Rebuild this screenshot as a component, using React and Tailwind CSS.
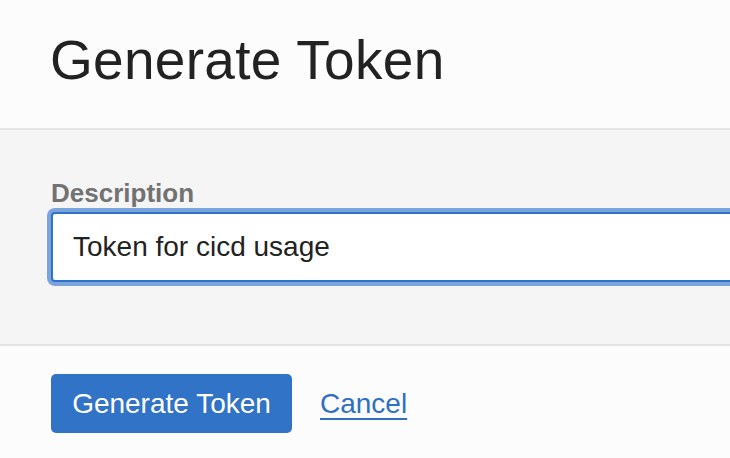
export default function App() {
  return (
    <div className="h-[458px] w-[730px] overflow-hidden bg-[#fcfcfc] font-['Liberation_Sans',Arial,sans-serif]">
      <header className="h-[130px] border-b-2 border-[#e4e4e4] bg-[#fcfcfc] pl-[50px] pt-[33px]">
        <h1 className="text-[55px] leading-none tracking-[0.3px] text-[#222222]">Generate Token</h1>
      </header>

      <section className="h-[216px] border-b-2 border-[#e4e4e4] bg-[#f5f5f5] pl-[51px] pt-[50px]">
        <label htmlFor="description" className="block text-[26px] font-bold leading-none text-[#727272]">
          Description
        </label>
        <input
          id="description"
          type="text"
          readOnly
          value="Token for cicd usage"
          className="mt-[6px] block h-[70px] w-[760px] rounded-[4px] border-2 border-[#2f72c9] bg-white px-[20px] text-[28px] text-[#222222] outline-none ring-4 ring-[#7ba3dc]"
        />
      </section>

      <footer className="flex items-center gap-[28px] pl-[51px] pt-[28px]">
        <button
          type="button"
          className="h-[59px] w-[241px] rounded-[5px] bg-[#3173c6] text-[28px] leading-none text-white"
        >
          Generate Token
        </button>
        <a href="#" className="text-[28px] leading-none text-[#2f6fc4] underline underline-offset-[5px]">
          Cancel
        </a>
      </footer>
    </div>
  );
}
